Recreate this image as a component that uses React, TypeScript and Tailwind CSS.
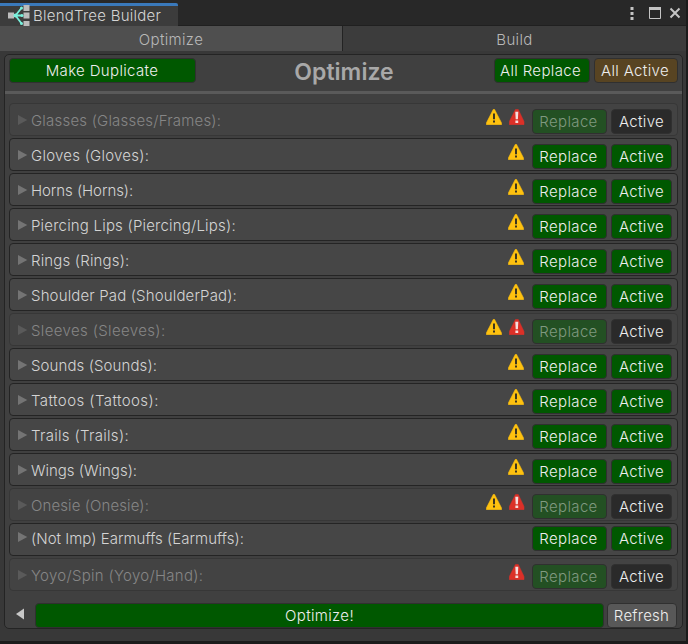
type Item = { label: string; tracking: string; off?: boolean; warn?: boolean; error?: boolean; raised?: boolean };

const items: Item[] = [
  { label: "Glasses (Glasses/Frames):", tracking: "tracking-[0.2px]", off: true, warn: true, error: true },
  { label: "Gloves (Gloves):", tracking: "tracking-[0.24px]", warn: true },
  { label: "Horns (Horns):", tracking: "tracking-[-0.07px]", warn: true },
  { label: "Piercing Lips (Piercing/Lips):", tracking: "tracking-[0.2px]", warn: true },
  { label: "Rings (Rings):", tracking: "tracking-[0.17px]", warn: true },
  { label: "Shoulder Pad (ShoulderPad):", tracking: "tracking-[0.15px]", warn: true },
  { label: "Sleeves (Sleeves):", tracking: "tracking-[0.36px]", off: true, warn: true, error: true },
  { label: "Sounds (Sounds):", tracking: "tracking-[0.1px]", warn: true },
  { label: "Tattoos (Tattoos):", tracking: "tracking-[0.42px]", warn: true },
  { label: "Trails (Trails):", tracking: "tracking-[0.31px]", warn: true },
  { label: "Wings (Wings):", tracking: "tracking-[0px]", warn: true },
  { label: "Onesie (Onesie):", tracking: "tracking-[0.1px]", off: true, warn: true, error: true },
  { label: "(Not Imp) Earmuffs (Earmuffs):", tracking: "tracking-[0.02px]", raised: true },
  { label: "Yoyo/Spin (Yoyo/Hand):", tracking: "tracking-[0.28px]", off: true, error: true },
];

function Warning() {
  return (
    <svg width="16" height="16" viewBox="0 0 16 16" className="block">
      <path d="M7.3 0.3 H8.5 L15.6 14 V15.7 H0.3 V14 Z" fill="#fec10f" stroke="#fec10f" strokeWidth="0.5" strokeLinejoin="round" />
      <path d="M7 4.5h2v5.8H7z M7 11.5h2v2H7z" fill="#3b3420" />
    </svg>
  );
}

function ErrorMark() {
  return (
    <svg width="16" height="16" viewBox="0 0 16 16" className="block">
      <path d="M6.4 0.5 H9.3 L15 12.5 V15.7 H0.3 V12.5 Z" fill="#db3028" stroke="#db3028" strokeWidth="0.5" strokeLinejoin="round" />
      <path d="M6.3 2.8h3l-.4 7.4H6.7z M6.4 11.6h2.8v2.4H6.4z" fill="#f5dede" />
    </svg>
  );
}

function TreeIcon() {
  return (
    <svg width="22" height="22" viewBox="0 0 22 22" className="block">
      <path d="M0 7.5h6v6H0z M15.5 0h6v6h-6z M15.5 7.5h6v6h-6z M15.5 16h6v6h-6z" fill="#bcbcbc" />
      <path d="M13.5 3 L7.5 10.5 L13.5 18.5 M7 10.5H14" fill="none" stroke="#78f0dc" strokeWidth="1.8" />
      <circle cx="13.5" cy="3" r="1.5" fill="#78f0dc" />
      <circle cx="14" cy="10.5" r="1.5" fill="#78f0dc" />
      <circle cx="13.5" cy="18.5" r="1.5" fill="#78f0dc" />
      <circle cx="7.5" cy="10.5" r="2" fill="#78f0dc" />
    </svg>
  );
}

const button = "flex h-[25px] shrink-0 items-center justify-center rounded-[4px] border border-[#303030] pt-px whitespace-nowrap";

function Row({ item }: { item: Item }) {
  return (
    <div className={`flex h-[33px] items-start rounded-[4px] border pr-[5px] pl-[8px] ${item.off ? "border-[#373737] bg-[#434343] text-[#868686]" : "border-[#242424] bg-[#464646] text-[#d4d4d4]"}`}>
      <svg width="10" height="10" viewBox="0 0 10 10" className={item.raised ? "mt-[8px]" : "mt-[11px]"}>
        <path d="M0 0 L9.3 5 L0 10Z" fill={item.off ? "#5a5a5a" : "#747474"} />
      </svg>
      <span className={`ml-[3px] leading-[20px] ${item.tracking} ${item.raised ? "mt-[5px]" : "mt-[7px]"}`}>{item.label}</span>
      <div className={`mt-[5px] ml-auto flex gap-[7px] ${item.error ? "mr-[7px]" : "mr-[8px]"}`}>
        {item.warn && <Warning />}
        {item.error && <ErrorMark />}
      </div>
      <div className={`flex gap-[4px] ${item.raised ? "mt-[2px]" : "mt-[5px]"}`}>
        <div className={`${button} w-[75px] pr-[2px] ${item.off ? "bg-[#235023] text-[#809980]" : "bg-[#005800] text-[#eeeeee]"}`}>Replace</div>
        <div className={`${button} w-[61px] text-[#eeeeee] ${item.off ? "bg-[#2a2a2a]" : "bg-[#005800]"}`}>Active</div>
      </div>
    </div>
  );
}

export default function App() {
  return (
    <div className="flex h-[644px] w-[688px] flex-col overflow-hidden border-r-2 border-b-[3px] border-[#1b1b1b] bg-[#383838] font-['Inter','Liberation_Sans',sans-serif] text-[15px] font-[340] tracking-[0.35px] text-[#d4d4d4]">
      <div className="flex h-[26px] shrink-0 items-start border-b border-[#202020] bg-[#282828]">
        <div className="mt-[3px] flex h-[23px] w-[178px] items-center rounded-tr-[2px] border-t-[3px] border-[#3a79bb] bg-[#3c3c3c] pl-[8px]">
          <TreeIcon />
          <span className="ml-[3px] leading-[20px] tracking-[0.25px] whitespace-nowrap">BlendTree Builder</span>
        </div>
        <svg width="60" height="26" viewBox="0 0 60 26" className="ml-auto">
          <path d="M4.5 7h3v3h-3z M4.5 12h3v3h-3z M4.5 17h3v3h-3z" fill="#c4c4c4" />
          <path d="M23.5 7.5h11v11h-11z" fill="none" stroke="#c4c4c4" />
          <path d="M23 7h12v3H23z" fill="#c4c4c4" />
          <path d="M44.5 8.5l9 9 M53.5 8.5l-9 9" stroke="#c4c4c4" strokeWidth="2" />
        </svg>
      </div>
      <div className="flex h-[25px] shrink-0 text-[#b8b8b8]">
        <div className="flex w-[343px] items-center justify-center border-r border-[#232323] bg-[#4f4f4f] pt-[3px]">Optimize</div>
        <div className="flex flex-1 items-center justify-center bg-[#3c3c3c] pt-[3px]">Build</div>
      </div>
      <div className="mt-[3px] mr-[3px] ml-[4px] flex h-[575px] shrink-0 flex-col rounded-[5px] border border-[#242424] bg-[#404040]">
        <div className="flex h-[36px] shrink-0 items-start px-[4px] pt-[3px]">
          <div className={`${button} w-[187px] bg-[#005800] pr-[1px] text-[#eeeeee]`}>Make Duplicate</div>
          <div className="flex-1 pr-[2px] text-center text-[23px] leading-[28px] font-semibold tracking-[0.05px] text-[#a8a8a8]">Optimize</div>
          <div className="flex gap-[4px]">
            <div className={`${button} w-[96px] bg-[#005800] pr-[3px] text-[#eeeeee]`}>All Replace</div>
            <div className={`${button} w-[84px] bg-[#584422] pr-[2px] text-[#eeeeee]`}>All Active</div>
          </div>
        </div>
        <div className="h-[3px] shrink-0 bg-[#5a5a5a]" />
        <div className="mt-[9px] flex flex-col gap-[2px] px-[4px]">
          {items.map((item) => (
            <Row key={item.label} item={item} />
          ))}
        </div>
        <div className="mt-[12px] flex items-start pr-[5px] pl-[11px]">
          <svg width="8" height="12" viewBox="0 0 8 12" className="mt-[5px]">
            <path d="M8 0.5V11.5L0 6Z" fill="#c8c8c8" />
          </svg>
          <div className={`${button} ml-[11px] w-[569px] bg-[#005800] text-[#eeeeee]`}>Optimize!</div>
          <div className={`${button} ml-[3px] w-[70px] bg-[#585858] pr-[1px] tracking-[0.25px] text-[#eeeeee]`}>Refresh</div>
        </div>
      </div>
    </div>
  );
}
